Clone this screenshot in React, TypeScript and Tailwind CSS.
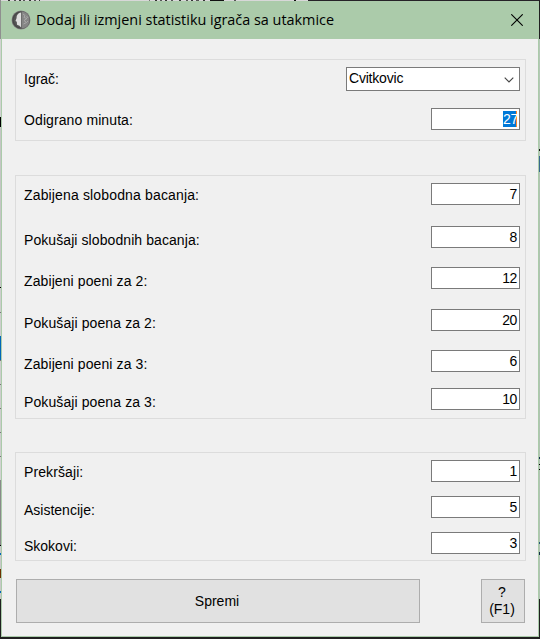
import React from "react";

type Row = { label: string; value: string; h: string; lt: string; track?: string };

const arial = "font-['Liberation_Sans',Arial,sans-serif]";

function Field({ label, value, h, lt, track = "tracking-[0.1px]", selected }: Row & { selected?: boolean }) {
  return (
    <div className={`flex items-start justify-between ${h}`}>
      <span className={`${lt} ${track} text-[14px] leading-4 whitespace-nowrap`}>{label}</span>
      <div className="flex h-[22px] w-[89px] shrink-0 justify-end border border-[#7a7a7a] bg-white pt-[2px] pr-[2px] text-[14px] leading-4 tracking-[-0.4px]">
        <span className={selected ? "h-4 w-[14px] border-r border-[#ff8728] bg-[#0078d7] text-white" : ""}>{value}</span>
      </div>
    </div>
  );
}

const shots: Row[] = [
  { label: "Zabijena slobodna bacanja:", value: "7", h: "h-[43px]", lt: "mt-1", track: "tracking-[0.15px]" },
  { label: "Pokušaji slobodnih bacanja:", value: "8", h: "h-[41px]", lt: "mt-[6px]", track: "tracking-[0.08px]" },
  { label: "Zabijeni poeni za 2:", value: "12", h: "h-[42px]", lt: "mt-[6px]" },
  { label: "Pokušaji poena za 2:", value: "20", h: "h-[41px]", lt: "mt-[6px]" },
  { label: "Zabijeni poeni za 3:", value: "6", h: "h-[38px]", lt: "mt-[6px]" },
  { label: "Pokušaji poena za 3:", value: "10", h: "h-[22px]", lt: "mt-[6px]" },
];

const others: Row[] = [
  { label: "Prekršaji:", value: "1", h: "h-9", lt: "mt-1" },
  { label: "Asistencije:", value: "5", h: "h-9", lt: "mt-[6px]", track: "tracking-normal" },
  { label: "Skokovi:", value: "3", h: "h-[22px]", lt: "mt-[6px]", track: "tracking-normal" },
];

const leftStrip: [number, string][] = [
  [39, "#8f8f8f"], [78, "#d2d2d2"], [10, "#000"], [160, "#c4c4c4"], [1, "#000"], [24, "#cdcdcd"],
  [1, "#777"], [23, "#cdcdcd"], [24, "#0067b8"], [1, "#777"], [23, "#cdcdcd"], [1, "#777"],
  [23, "#cdcdcd"], [1, "#777"], [23, "#cdcdcd"], [1, "#777"], [23, "#cdcdcd"], [1, "#777"],
  [23, "#d2d2d2"], [65, "#898989"], [1, "#000"], [7, "#c8c8c8"], [2, "#0067b8"], [14, "#c8c8c8"],
  [9, "#6d3000"], [13, "#c8c8c8"], [2, "#0067b8"], [6, "#c8c8c8"], [40, "#202020"],
];

const rightStrip: [number, string][] = [
  [39, "#202020"], [110, "#b5c6b7"], [2, "#111"], [5, "#b5c6b7"], [16, "#37698d"], [285, "#b0c2b2"],
  [2, "#12304a"], [5, "#b0c2b2"], [1, "#000"], [4, "#b0c2b2"], [1, "#000"], [72, "#b0c2b2"],
  [2, "#285a78"], [8, "#b0c2b2"], [3, "#12304a"], [44, "#b0c2b2"], [40, "#202020"],
];

const topStrip: [number, string][] = [
  [7, "#d8d8d8"], [2, "#333"], [4, "#d8d8d8"], [2, "#555"], [3, "#d8d8d8"], [2, "#333"], [2, "#d8d8d8"],
  [2, "#555"], [4, "#d8d8d8"], [2, "#333"], [3, "#d8d8d8"], [2, "#555"], [3, "#d8d8d8"], [1, "#333"],
  [109, "#d8d8d8"], [1, "#777"], [5, "#d8d8d8"], [2, "#333"], [3, "#d8d8d8"], [2, "#555"],
  [3, "#d8d8d8"], [2, "#333"], [4, "#d8d8d8"], [2, "#555"], [6, "#d8d8d8"], [2, "#333"],
  [5, "#d8d8d8"], [2, "#555"], [3, "#d8d8d8"], [2, "#333"], [3, "#d8d8d8"], [3, "#555"],
  [4, "#d8d8d8"], [2, "#333"], [5, "#d8d8d8"], [14, "#111"], [10, "#d8d8d8"], [2, "#555"],
  [58, "#d8d8d8"], [2, "#111"], [12, "#d8d8d8"], [233, "#262228"],
];

function Strip({ parts }: { parts: [number, string][] }) {
  return (
    <div className="flex h-[639px] w-px shrink-0 flex-col overflow-hidden">
      {parts.map(([height, background], i) => (
        <div key={i} className="shrink-0" style={{ height, background }} />
      ))}
    </div>
  );
}

export default function App() {
  return (
    <div className={`flex h-[639px] w-[540px] overflow-hidden bg-[#202020] text-black ${arial}`}>
      <Strip parts={leftStrip} />
      <div className="flex w-[538px] flex-col">
        <div className="flex h-px shrink-0 overflow-hidden">
          {topStrip.map(([width, background], i) => (
            <div key={i} className="shrink-0" style={{ width, background }} />
          ))}
        </div>
        <div className="flex h-[636px] flex-col border-x border-b border-[#abcbaa] bg-[#f0f0f0]">
          <header className="flex h-[38px] shrink-0 items-center bg-[#abcbaa] pr-[15px] pl-[9px]">
            <svg width="20" height="20" viewBox="0 0 20 20">
              <defs>
                <radialGradient id="rim">
                  <stop offset="0.7" stopColor="#555" />
                  <stop offset="0.85" stopColor="#444" />
                  <stop offset="1" stopColor="#888" />
                </radialGradient>
              </defs>
              <circle cx="10" cy="10" r="9.5" fill="url(#rim)" />
              <path d="M10 2.5C6.5 3 5.5 6 5.6 8L4.5 11l1.3.8.2 3 2.5 1 1.5 1.7z" fill="#dedede" />
              <path d="M10.5 1.5c5 .3 8 3.6 8 8.5s-3 8-8 8.5z" fill="#858585" />
              <path d="M12 4l2 1.5-1 2 3 1-3 2 2.5 2-3 1.500M15.5 6l1.500 2M16 12l1-1" fill="none" stroke="#b0b0b0" strokeWidth=".8" />
            </svg>
            <h1 className="ml-[5px] text-[14.4px] leading-5 font-normal whitespace-nowrap font-['Open_Sans','Noto_Sans',sans-serif]">
              Dodaj ili izmjeni statistiku igrača sa utakmice
            </h1>
            <svg className="ml-auto" width="12" height="12" viewBox="0 0 12 12">
              <path d="M.3.3l11.4 11.4M11.7.3L.3 11.7" stroke="#000" strokeWidth="1.1" />
            </svg>
          </header>
          <main className="flex flex-col pt-5 pl-[13px]">
            <section className="h-[82px] w-[511px] border border-[#dcdcdc] pt-[7px] pr-[5px] pl-2">
              <div className="flex h-[41px] items-start justify-between">
                <span className="mt-1 text-[14px] leading-4">Igrač:</span>
                <div className="flex h-6 w-[174px] justify-between border border-[#7a7a7a] bg-white pt-[2px] pr-[5px] pl-[2px] text-[14px] leading-4 tracking-[-0.2px]">
                  <span>Cvitkovic</span>
                  <svg className="mt-[7px]" width="10" height="6" viewBox="0 0 10 6">
                    <path d="M.7.7L5 5 9.3.7" fill="none" stroke="#444" strokeWidth="1.1" />
                  </svg>
                </div>
              </div>
              <Field label="Odigrano minuta:" value="27" h="h-[22px]" lt="mt-1" selected />
            </section>
            <section className="mt-[34px] h-[244px] w-[511px] border border-[#dcdcdc] pt-[7px] pr-[5px] pl-2">
              {shots.map((r) => (
                <Field key={r.label} {...r} />
              ))}
            </section>
            <section className="mt-[33px] h-[109px] w-[511px] border border-[#dcdcdc] pt-[7px] pr-[5px] pl-2">
              {others.map((r) => (
                <Field key={r.label} {...r} />
              ))}
            </section>
            <div className="mt-[18px] ml-px flex w-[509px] justify-between">
              <button className="h-11 w-[404px] border border-[#adadad] bg-[#e1e1e1] pr-[2px] text-[14px] leading-4">
                Spremi
              </button>
              <button className="h-11 w-11 border border-[#adadad] bg-[#e1e1e1] pr-[2px] text-[14px] leading-[17px]">
                ?<br />(F1)
              </button>
            </div>
          </main>
        </div>
      </div>
      <Strip parts={rightStrip} />
    </div>
  );
}
